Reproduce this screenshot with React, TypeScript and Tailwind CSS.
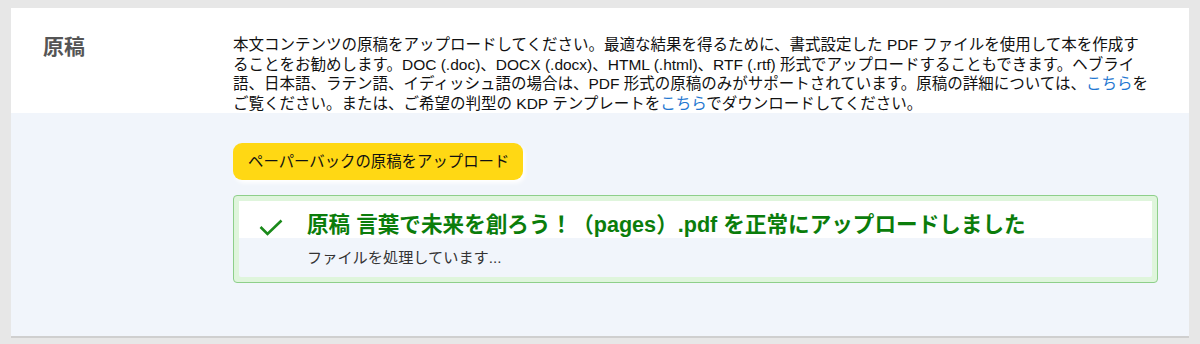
import React from "react";

export default function App() {
  const font = { fontFamily: '"Liberation Sans", "Noto Sans CJK JP", sans-serif' };
  return (
    <div className="min-h-[344px] w-[1200px] bg-[#e7e7e7] pt-[8px] pl-[11px]" style={font}>
      <div className="w-[1178px] h-[330px] border-b-2 border-[#cfcfcf] bg-[#f1f5fb] flex flex-col">
        <div className="bg-white h-[105px] flex pt-[25px]">
          <div className="w-[222px] pl-[32px] shrink-0">
            <h2 className="text-[21px] leading-[28px] font-bold text-[#555555]">原稿</h2>
          </div>
          <p className="mt-[2px] w-[930px] text-[15.5px] leading-[19.5px] text-[#111111] whitespace-nowrap">
            <span className="block">本文コンテンツの原稿をアップロードしてください。最適な結果を得るために、書式設定した PDF ファイルを使用して本を作成す</span>
            <span className="block">ることをお勧めします。DOC (.doc)、DOCX (.docx)、HTML (.html)、RTF (.rtf) 形式でアップロードすることもできます。ヘブライ</span>
            <span className="block">語、日本語、ラテン語、イディッシュ語の場合は、PDF 形式の原稿のみがサポートされています。原稿の詳細については、<span className="text-[#1f78d1]">こちら</span>を</span>
            <span className="block">ご覧ください。または、ご希望の判型の KDP テンプレートを<span className="text-[#1f78d1]">こちら</span>でダウンロードしてください。</span>
          </p>
        </div>
        <div className="pl-[222px] pt-[30px] flex flex-col items-start">
          <button className="h-[37px] w-[290px] rounded-[9px] bg-[#ffd814] text-[15.4px] text-[#111111] pl-[15px] text-left shadow-[2px_3px_4px_#ffffff]">
            ペーパーバックの原稿をアップロード
          </button>
          <div className="mt-[15px] w-[925px] h-[88px] rounded-[4px] border border-[#8ecf8a] bg-[#dff5dc] p-[5px]">
            <div className="h-full bg-[#f1f5fb] rounded-[2px]">
              <div className="bg-white h-[37px] flex pl-[20px] pt-[11px]">
                <svg width="24" height="17" viewBox="0 0 24 17" className="mt-[7px] shrink-0">
                  <polyline points="1.5,8 8.5,15 22.5,1.5" fill="none" stroke="#1a8a1a" strokeWidth="2.6" />
                </svg>
                <div className="ml-[24px] text-[21.6px] leading-[26px] font-bold text-[#0b7d0b] whitespace-nowrap">
                  原稿 言葉で未来を創ろう！（pages）.pdf を正常にアップロードしました
                </div>
              </div>
              <div className="pl-[68px] mt-[10px] text-[15.2px] leading-[20px] text-[#333333]">
                ファイルを処理しています...
              </div>
            </div>
          </div>
        </div>
      </div>
    </div>
  );
}
